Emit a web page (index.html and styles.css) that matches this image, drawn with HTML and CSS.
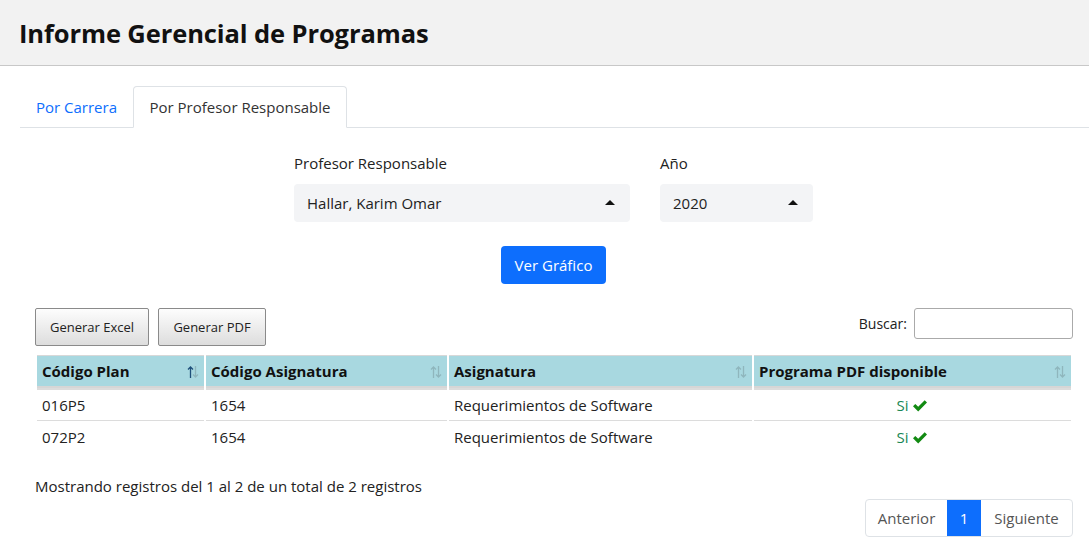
FILE: index.html
```html
<!DOCTYPE html>
<html lang="es">
<head>
<meta charset="utf-8">
<title>Informe Gerencial de Programas</title>
<link rel="stylesheet" href="styles.css">
</head>
<body>
<header class="topbar">
  <h1 class="title">Informe Gerencial de Programas</h1>
</header>

<nav class="tabs">
  <a class="tab" href="#">Por Carrera</a>
  <a class="tab active" href="#">Por Profesor Responsable</a>
</nav>

<section class="filters">
  <div class="filter-row">
    <div class="field field-prof">
      <label class="field-label">Profesor Responsable</label>
      <div class="select">
        <span>Hallar, Karim Omar</span>
        <span class="caret"></span>
      </div>
    </div>
    <div class="field field-year">
      <label class="field-label">Año</label>
      <div class="select">
        <span>2020</span>
        <span class="caret"></span>
      </div>
    </div>
  </div>
  <div class="btn-row">
    <button class="btn-primary">Ver Gráfico</button>
  </div>
</section>

<section class="data">
  <div class="toolbar">
    <div class="export">
      <button class="btn-export">Generar Excel</button>
      <button class="btn-export">Generar PDF</button>
    </div>
    <div class="search">
      <label class="search-label">Buscar:</label>
      <input class="search-input" type="text">
    </div>
  </div>

  <table class="grid">
    <thead>
      <tr>
        <th class="c1"><div class="th-in"><span>Código Plan</span>
          <svg class="sort active" width="12" height="14" viewBox="0 0 12 14"><path class="up" d="M3.5 13V2M1 4.5L3.5 2L6 4.5" fill="none" stroke-width="1.3"/><path class="down" d="M8.5 1V12M6 9.5L8.5 12L11 9.5" fill="none" stroke-width="1.3"/></svg></div></th>
        <th class="c2"><div class="th-in"><span>Código Asignatura</span>
          <svg class="sort" width="12" height="14" viewBox="0 0 12 14"><path class="up" d="M3.5 13V2M1 4.5L3.5 2L6 4.5" fill="none" stroke-width="1.3"/><path class="down" d="M8.5 1V12M6 9.5L8.5 12L11 9.5" fill="none" stroke-width="1.3"/></svg></div></th>
        <th class="c3"><div class="th-in"><span>Asignatura</span>
          <svg class="sort" width="12" height="14" viewBox="0 0 12 14"><path class="up" d="M3.5 13V2M1 4.5L3.5 2L6 4.5" fill="none" stroke-width="1.3"/><path class="down" d="M8.5 1V12M6 9.5L8.5 12L11 9.5" fill="none" stroke-width="1.3"/></svg></div></th>
        <th class="c4"><div class="th-in"><span>Programa PDF disponible</span>
          <svg class="sort" width="12" height="14" viewBox="0 0 12 14"><path class="up" d="M3.5 13V2M1 4.5L3.5 2L6 4.5" fill="none" stroke-width="1.3"/><path class="down" d="M8.5 1V12M6 9.5L8.5 12L11 9.5" fill="none" stroke-width="1.3"/></svg></div></th>
      </tr>
    </thead>
    <tbody>
      <tr>
        <td>016P5</td>
        <td>1654</td>
        <td>Requerimientos de Software</td>
        <td class="center"><span class="yes">Si</span> <svg class="check" width="16" height="13" viewBox="0 0 16 13"><path d="M1 7.2L3.3 4.9L6.2 7.8L12.7 1.3L15 3.6L6.2 12.4Z"/></svg></td>
      </tr>
      <tr>
        <td>072P2</td>
        <td>1654</td>
        <td>Requerimientos de Software</td>
        <td class="center"><span class="yes">Si</span> <svg class="check" width="16" height="13" viewBox="0 0 16 13"><path d="M1 7.2L3.3 4.9L6.2 7.8L12.7 1.3L15 3.6L6.2 12.4Z"/></svg></td>
      </tr>
    </tbody>
  </table>

  <p class="info">Mostrando registros del 1 al 2 de un total de 2 registros</p>

  <div class="pager-row">
    <div class="pager">
      <a class="page prev" href="#">Anterior</a>
      <a class="page current" href="#">1</a>
      <a class="page next" href="#">Siguiente</a>
    </div>
  </div>
</section>
</body>
</html>
```

FILE: styles.css
```css
* { box-sizing: border-box; }

body {
  margin: 0;
  font-family: "Open Sans", "Noto Sans", "Liberation Sans", sans-serif;
  color: #212529;
  background: #fff;
  font-size: 15px;
}

.topbar {
  height: 66px;
  background: #f2f2f2;
  border-bottom: 1px solid #c8c8c8;
  display: flex;
  align-items: center;
  padding-left: 19px;
}

.title {
  margin: 0;
  font-size: 25.5px;
  font-weight: 700;
  color: #111;
  letter-spacing: -0.1px;
}

.tabs {
  margin: 20px 0 0 20px;
  display: flex;
  border-bottom: 1px solid #dee2e6;
  height: 42px;
}

.tab {
  display: flex;
  align-items: center;
  justify-content: center;
  white-space: nowrap;
  height: 42px;
  font-size: 15px;
  color: #0d6efd;
  text-decoration: none;
  border: 1px solid transparent;
  border-top-left-radius: 4px;
  border-top-right-radius: 4px;
  margin-bottom: -1px;
  width: 113px;
  flex: none;
}

.tab.active {
  width: 214px;
  color: #333;
  background: #fff;
  border-color: #dee2e6 #dee2e6 #fff;
}

.filters {
  padding-top: 24px;
}

.filter-row {
  display: flex;
  justify-content: center;
  gap: 30px;
  padding-left: 18px;
}

.field-label {
  display: block;
  font-size: 15px;
  height: 22px;
  line-height: 22px;
  margin-bottom: 10px;
  color: #222;
}

.field-prof { width: 336px; }
.field-year { width: 153px; }

.select {
  height: 38px;
  background: #f3f4f6;
  border-radius: 4px;
  display: flex;
  align-items: center;
  justify-content: space-between;
  padding: 0 15px 0 13px;
  font-size: 15px;
  color: #222;
}

.caret {
  width: 0;
  height: 0;
  border-left: 5px solid transparent;
  border-right: 5px solid transparent;
  border-bottom: 5px solid #111;
  margin-top: -2px;
}

.btn-row {
  display: flex;
  justify-content: center;
  padding-left: 18px;
  margin-top: 24px;
}

.btn-primary {
  height: 38px;
  width: 105px;
  background: #0d6efd;
  color: #fff;
  border: none;
  border-radius: 4px;
  font-family: inherit;
  font-size: 15px;
  padding: 0;
}

.data {
  padding: 24px 16px 0 35px;
}

.toolbar {
  display: flex;
  justify-content: space-between;
  align-items: flex-start;
  height: 47px;
}

.export {
  display: flex;
  gap: 9px;
}

.btn-export {
  height: 38px;
  padding: 0 12px;
  font-family: inherit;
  font-size: 13px;
  color: #222;
  background: linear-gradient(#fdfdfd, #dddddd);
  border: 1px solid #8a8a8a;
  border-radius: 2px;
}

.btn-export:first-child { width: 114px; }
.btn-export:last-child { width: 108px; }

.search {
  display: flex;
  align-items: center;
  gap: 7px;
  height: 31px;
}

.search-label {
  font-size: 14px;
  color: #222;
}

.search-input {
  width: 159px;
  height: 31px;
  border: 1px solid #aaa;
  border-radius: 3px;
  background: #fff;
}

.grid {
  width: 1038px;
  border-collapse: separate;
  border-spacing: 2px 0;
  font-size: 15px;
}

.grid th {
  background: #a8d8e0;
  text-align: left;
  font-weight: 700;
  color: #111;
  height: 33px;
  padding: 0 5px;
  border-top: 1px solid #d8d8d8;
  border-bottom: 2px solid #d6d6d6;
}

.grid .c1 { width: 167px; }
.grid .c2 { width: 241px; }
.grid .c3 { width: 303px; }

.th-in {
  display: flex;
  justify-content: space-between;
  align-items: center;
}

.sort { display: block; margin-top: 2px; }
.sort .up, .sort .down { stroke: #8fb6bd; }
.sort.active .up { stroke: #1e4f7a; }

.grid td {
  height: 32px;
  padding: 0 5px;
  border-top: 1px solid #dcdcdc;
  color: #222;
}

.grid tbody tr:first-child td { border-top: 2px solid #dcdcdc; }

.grid td.center { text-align: center; }

.yes { color: #198754; }

.check {
  fill: #128a12;
  vertical-align: -1px;
}

.info {
  margin: 24px 0 0;
  font-size: 15px;
  color: #222;
}

.pager-row {
  display: flex;
  justify-content: flex-end;
  margin-top: 3px;
}

.pager {
  display: flex;
  border: 1px solid #dee2e6;
  border-radius: 4px;
  height: 38px;
  overflow: hidden;
}

.page {
  display: flex;
  align-items: center;
  justify-content: center;
  font-size: 15px;
  color: #555;
  text-decoration: none;
}

.page.prev { width: 81px; }
.page.next { width: 91px; }

.page.current {
  background: #0d6efd;
  color: #fff;
  width: 34px;
}
```
